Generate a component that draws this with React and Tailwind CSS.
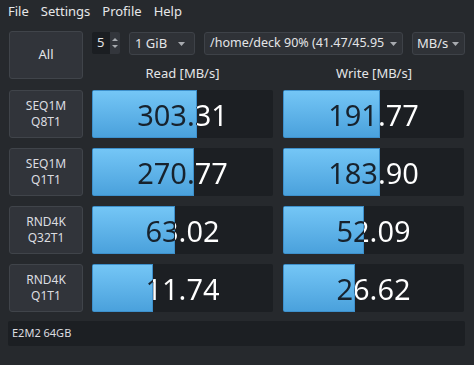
import React from "react";

const FONT = { fontFamily: '"Noto Sans", "Open Sans", sans-serif' };

function Arrow() {
  return (
    <svg width="7" height="4" viewBox="0 0 7 4" className="shrink-0">
      <path d="M0 0 L7 0 L3.5 4 Z" fill="#a8abb0" />
    </svg>
  );
}

function Combo({ w, children, pad = "pl-[5px] pr-[9px] gap-[6px]", size = "text-[13px]" }) {
  return (
    <div
      className={`${w} h-[23px] flex items-center justify-between ${pad} bg-[#2f3237] border border-[#3e4248] rounded-[3px] ${size} text-[#e4e5e7] whitespace-nowrap`}
    >
      <span>{children}</span>
      <Arrow />
    </div>
  );
}

function Cell({ value, bar }) {
  return (
    <div className="relative w-[181px] h-[48px] bg-[#1c1f23] rounded-[2px] overflow-hidden">
      <div
        className="absolute left-0 top-0 bottom-0 bg-gradient-to-b from-[#74c6f6] to-[#4aa1dc] border border-[#3d90cc]"
        style={{ width: bar }}
      />
      <div
        className="absolute inset-0 flex items-center justify-center text-[29px] pt-[1px] bg-clip-text text-transparent"
        style={{
          backgroundImage: `linear-gradient(to right, #17222d ${bar}px, #ffffff ${bar}px)`,
        }}
      >
        {value}
      </div>
    </div>
  );
}

function Label({ a, b }) {
  return (
    <div className="w-[74px] h-[48px] flex flex-col items-center justify-center bg-[#31343a] border border-[#40444a] rounded-[3px] text-[12px] leading-[16px] text-[#dcdde0]">
      <span>{a}</span>
      <span>{b}</span>
    </div>
  );
}

const rows = [
  ["SEQ1M", "Q8T1", "303.31", 105, "191.77", 97],
  ["SEQ1M", "Q1T1", "270.77", 102, "183.90", 97],
  ["RND4K", "Q32T1", "63.02", 83, "52.09", 81],
  ["RND4K", "Q1T1", "11.74", 61, "26.62", 72],
];

export default function App() {
  return (
    <div className="w-[474px] h-[365px] bg-[#26292d] text-[#e4e5e7] overflow-hidden" style={FONT}>
      <div className="h-[24px] flex items-center gap-[12px] pl-[8px] text-[13px] text-[#e6e7e9]">
        <span>File</span>
        <span>Settings</span>
        <span>Profile</span>
        <span>Help</span>
      </div>
      <div className="pl-[9px] pt-[7px] flex gap-[9px]">
        <div className="w-[74px] h-[48px] flex items-center justify-center bg-[#31343a] border border-[#40444a] rounded-[3px] text-[13px] text-[#e4e5e7]">
          All
        </div>
        <div className="flex flex-col">
          <div className="flex gap-[9px] mt-[1px]">
            <div className="w-[28px] h-[22px] flex rounded-[2px] overflow-hidden">
              <div className="w-[18px] bg-[#1b1e22] flex items-center pl-[5px] text-[13px]">5</div>
              <div className="w-[10px] bg-[#33363c] flex flex-col items-center justify-center gap-[4px]">
                <svg width="6" height="3" viewBox="0 0 6 3"><path d="M0 3 L3 0 L6 3 Z" fill="#a8abb0" /></svg>
                <svg width="6" height="3" viewBox="0 0 6 3"><path d="M0 0 L6 0 L3 3 Z" fill="#a8abb0" /></svg>
              </div>
            </div>
            <Combo w="w-[66px]">1 GiB</Combo>
            <Combo w="w-[199px]" size="text-[12.5px]">/home/deck 90% (41.47/45.95</Combo>
            <Combo w="w-[53px]" pad="pl-[4px] pr-[5px] gap-[2px]">MB/s</Combo>
          </div>
          <div className="flex gap-[10px] h-[35px] items-center text-[13px] text-[#e4e5e7]">
            <div className="w-[181px] text-center pt-[3px]">Read [MB/s]</div>
            <div className="w-[182px] text-center pt-[3px]">Write [MB/s]</div>
          </div>
        </div>
      </div>
      <div className="pl-[9px] flex flex-col gap-[10px]">
        {rows.map(([a, b, r, rb, w, wb]) => (
          <div key={a + b} className="flex gap-[9px]">
            <Label a={a} b={b} />
            <div className="flex gap-[10px]">
              <Cell value={r} bar={rb} />
              <Cell value={w} bar={wb} />
            </div>
          </div>
        ))}
      </div>
      <div className="ml-[8px] mt-[9px] w-[457px] h-[25px] bg-[#1c1f23] rounded-[2px] flex items-center pl-[4px] text-[11px] text-[#dcdde0]">
        E2M2 64GB
      </div>
    </div>
  );
}
